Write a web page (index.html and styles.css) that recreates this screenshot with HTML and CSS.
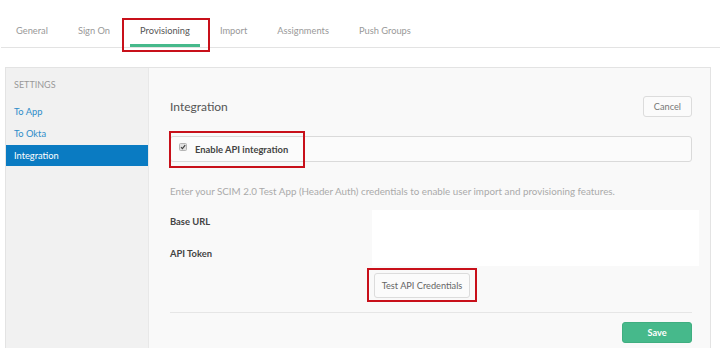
FILE: index.html
```html
<!DOCTYPE html>
<html lang="en">
<head>
    <meta charset="UTF-8">
    <meta name="viewport" content="width=device-width, initial-scale=1.0">
    <title>Provisioning</title>
    <link rel="stylesheet" href="styles.css">
</head>
<body>
    <!-- Zakładki aplikacji -->
    <nav class="tabs">
        <a class="tab">General</a>
        <a class="tab">Sign On</a>
        <a class="tab active">Provisioning<span class="callout callout-tab"></span></a>
        <a class="tab">Import</a>
        <a class="tab">Assignments</a>
        <a class="tab">Push Groups</a>
    </nav>

    <div class="panel">
        <aside class="sidebar">
            <div class="sidebar-title">SETTINGS</div>
            <a class="side-link">To App</a>
            <a class="side-link">To Okta</a>
            <a class="side-link selected">Integration</a>
        </aside>

        <main class="main">
            <header class="main-header">
                <h2>Integration</h2>
                <button class="btn">Cancel</button>
            </header>

            <div class="check-row">
                <svg class="checkbox" width="8" height="8" viewBox="0 0 8 8">
                    <rect x="0.5" y="0.5" width="7" height="7" rx="1" fill="#e2e2e2" stroke="#b5b5b5"/>
                    <path d="M2 4.2 L3.4 5.6 L6.2 2.2" fill="none" stroke="#444" stroke-width="1.2"/>
                </svg>
                <span class="check-label">Enable API integration</span>
                <span class="callout callout-check"></span>
            </div>

            <p class="desc">Enter your SCIM 2.0 Test App (Header Auth) credentials to enable user import and provisioning features.</p>

            <div class="fields">
                <div class="labels">
                    <label>Base URL</label>
                    <label>API Token</label>
                </div>
                <div class="inputs"></div>
            </div>

            <div class="test-row">
                <button class="btn btn-test">Test API Credentials<span class="callout callout-test"></span></button>
            </div>

            <footer class="main-footer">
                <button class="btn btn-save">Save</button>
            </footer>
        </main>
    </div>
</body>
</html>
```

FILE: styles.css
```css
:root {
    --okta-blue: #0a7bc2;
    --okta-green: #46b98b;
    --callout-red: #c8101a;
    --line: #e3e3e3;
}

* {
    margin: 0;
    padding: 0;
    box-sizing: border-box;
}

body {
    font-family: Lato, 'Liberation Sans', sans-serif;
    font-size: 9.4px;
    color: #555;
    background: #fff;
}

/* Zakładki */
.tabs {
    display: flex;
    margin-left: 1px;
    height: 48px;
    border-bottom: 1px solid var(--line);
}

.tab {
    position: relative;
    padding: 25px 10px 0;
    margin: 0 5px;
    color: #999;
    font-size: 9.3px;
    border-bottom: 3px solid transparent;
}

.tab.active {
    color: #555;
    border-bottom-color: var(--okta-green);
}

/* Czerwone ramki adnotacji */
.callout {
    position: absolute;
    border: 2px solid var(--callout-red);
    pointer-events: none;
}

.callout-tab {
    left: -8px;
    right: -10px;
    top: 18px;
    bottom: -8px;
}

.callout-check {
    left: -2px;
    top: -6px;
    width: 136px;
    height: 37px;
}

.callout-test {
    left: -8px;
    right: -8px;
    top: -6px;
    bottom: -5px;
}

/* Panel */
.panel {
    display: flex;
    margin: 19px 9px 0 5px;
    height: 281px;
    border: 1px solid var(--line);
    border-bottom: none;
}

.sidebar {
    flex-shrink: 0;
    width: 143px;
    background: #f1f1f1;
    border-right: 1px solid #e8e8e8;
    padding-top: 11px;
}

.sidebar-title {
    padding-left: 8px;
    color: #999;
    font-size: 9px;
    margin-bottom: 11px;
}

.side-link {
    display: block;
    padding: 0 8px;
    height: 22px;
    line-height: 22px;
    color: #2d8cc9;
    font-size: 9.3px;
}

.side-link.selected {
    background: var(--okta-blue);
    color: #fff;
    height: 21px;
    line-height: 21px;
}

.main {
    flex: 1;
    background: #f9f9f9;
    padding: 28px 18px 0 21px;
}

.main-header {
    display: flex;
    justify-content: space-between;
    align-items: center;
    height: 21px;
}

.main-header h2 {
    font-weight: 400;
    font-size: 12px;
    color: #555;
}

.btn {
    position: relative;
    font-family: inherit;
    font-size: 9.2px;
    color: #777;
    background: #fbfbfb;
    border: 1px solid #dcdcdc;
    border-radius: 3px;
    height: 21px;
    padding: 0 10px;
}

.check-row {
    position: relative;
    display: flex;
    align-items: center;
    margin-top: 19px;
    height: 26px;
    padding-left: 8px;
    background: #fbfbfb;
    border: 1px solid #dadada;
    border-radius: 3px;
}

.checkbox {
    margin-right: 8px;
    margin-top: -4px;
}

.check-label {
    font-weight: 700;
    color: #444;
}

.desc {
    margin-top: 23px;
    font-size: 9.8px;
    color: #aaa;
}

.fields {
    display: flex;
    margin-top: 13px;
}

.labels {
    width: 202px;
    flex-shrink: 0;
    display: flex;
    flex-direction: column;
    padding-top: 6px;
    gap: 21px;
}

.labels label {
    font-weight: 700;
    color: #444;
}

.inputs {
    flex: 1;
    margin-right: -7px;
    height: 56px;
    background: #fff;
}

.test-row {
    padding: 7px 0 0 204px;
}

.btn-test {
    height: 25px;
    width: 96px;
    padding: 0;
    color: #666;
}

.main-footer {
    margin-top: 14px;
    border-top: 1px solid #e6e6e6;
    padding-top: 9px;
    display: flex;
    justify-content: flex-end;
}

.btn-save {
    width: 70px;
    background: var(--okta-green);
    border-color: #3fae80;
    color: #fff;
    font-weight: 700;
}
```
